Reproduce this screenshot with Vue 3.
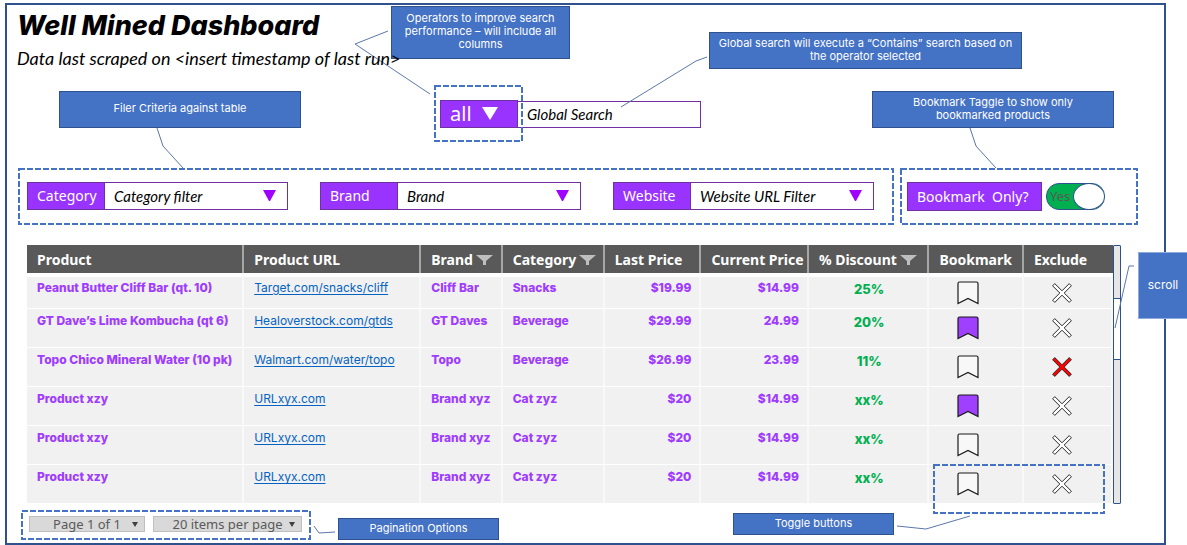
<script setup>
import { ref, reactive } from 'vue'

const operator = ref('all')
const query = ref('')
const bookmarkOnly = ref(true)
const page = ref('Page 1 of 1')
const pageSize = ref('20 items per page')

const filters = reactive([
  { id: 'category', label: 'Category', value: 'Category filter' },
  { id: 'brand', label: 'Brand', value: 'Brand' },
  { id: 'website', label: 'Website', value: 'Website URL Filter' },
])

const columns = [
  { key: 'product', label: 'Product' },
  { key: 'url', label: 'Product URL' },
  { key: 'brand', label: 'Brand', filter: true },
  { key: 'category', label: 'Category', filter: true },
  { key: 'last', label: 'Last Price' },
  { key: 'current', label: 'Current Price' },
  { key: 'discount', label: '% Discount', filter: true },
  { key: 'bookmark', label: 'Bookmark' },
  { key: 'exclude', label: 'Exclude' },
]

const rows = reactive([
  { product: 'Peanut Butter Cliff Bar (qt. 10)', url: 'Target.com/snacks/cliff', brand: 'Cliff Bar', category: 'Snacks', last: '$19.99', current: '$14.99', discount: '25%', bookmarked: false, excluded: false },
  { product: 'GT Dave’s Lime Kombucha (qt 6)', url: 'Healoverstock.com/gtds', brand: 'GT Daves', category: 'Beverage', last: '$29.99', current: '24.99', discount: '20%', bookmarked: true, excluded: false },
  { product: 'Topo Chico Mineral Water (10 pk)', url: 'Walmart.com/water/topo', brand: 'Topo', category: 'Beverage', last: '$26.99', current: '23.99', discount: '11%', bookmarked: false, excluded: true },
  { product: 'Product xzy', url: 'URLxyx.com', brand: 'Brand xyz', category: 'Cat zyz', last: '$20', current: '$14.99', discount: 'xx%', bookmarked: true, excluded: false },
  { product: 'Product xzy', url: 'URLxyx.com', brand: 'Brand xyz', category: 'Cat zyz', last: '$20', current: '$14.99', discount: 'xx%', bookmarked: false, excluded: false },
  { product: 'Product xzy', url: 'URLxyx.com', brand: 'Brand xyz', category: 'Cat zyz', last: '$20', current: '$14.99', discount: 'xx%', bookmarked: false, excluded: false },
])
</script>

<template>
  <main class="frame">
    <header class="head">
      <h1>Well Mined Dashboard</h1>
      <p class="stamp">Data last scraped on &lt;insert timestamp of last run&gt;</p>
    </header>

    <form class="search" @submit.prevent>
      <div class="operator">
        <select v-model="operator" aria-label="Search operator">
          <option>all</option>
          <option>any</option>
        </select>
        <svg class="op-arrow" viewBox="0 0 16 13"><path d="M0 0H16L8 13Z" fill="#fff" /></svg>
        <svg class="dashes op-dashes"><rect /></svg>
      </div>
      <input v-model="query" type="text" placeholder="Global Search" aria-label="Global Search" />
      <aside class="note note-operator">Operators to improve search performance – will include all columns</aside>
      <aside class="note note-global">Global search will execute a “Contains” search based on the operator selected</aside>
      <svg class="wire"><path d="M-52 -69L-85 -56L-10 -6M267 -43L256 -39L181 7" /></svg>
    </form>

    <section class="filters">
      <div class="region filter-group">
        <svg class="dashes"><rect /></svg>
        <div v-for="f in filters" :key="f.id" class="filter">
          <label :for="f.id">{{ f.label }}</label>
          <select :id="f.id" v-model="f.value">
            <option>{{ f.value }}</option>
          </select>
          <svg class="arrow" viewBox="0 0 13 11"><path d="M0 0H13L7 11H6Z" fill="#9f00ff" /></svg>
        </div>
        <aside class="note note-filter">Filer Criteria against table</aside>
        <svg class="wire"><path d="M139 -40L145 -22L165 0" /></svg>
      </div>
      <div class="region mark-group">
        <svg class="dashes"><rect /></svg>
        <label class="mark-label" for="only">Bookmark&nbsp; Only?</label>
        <label class="switch">
          <input id="only" v-model="bookmarkOnly" type="checkbox" role="switch" />
          <span>Yes</span>
          <i class="knob"></i>
        </label>
        <aside class="note note-mark">Bookmark Taggle to show only bookmarked products</aside>
        <svg class="wire"><path d="M70 -40L76 -22L96 0" /></svg>
      </div>
    </section>

    <section class="grid">
      <table>
        <colgroup>
          <col v-for="c in columns" :key="c.key" :class="'col-' + c.key" />
        </colgroup>
        <thead>
          <tr>
            <th v-for="c in columns" :key="c.key" scope="col">
              <span class="th">{{ c.label }}
                <svg v-if="c.filter" class="funnel" viewBox="0 0 17 10"><path d="M0 0H17L10 6V10H7V6Z" fill="#bfbfbf" /></svg>
              </span>
            </th>
          </tr>
        </thead>
        <tbody>
          <tr v-for="(r, i) in rows" :key="i">
            <td>{{ r.product }}</td>
            <td><a href="#">{{ r.url }}</a></td>
            <td>{{ r.brand }}</td>
            <td>{{ r.category }}</td>
            <td class="num">{{ r.last }}</td>
            <td class="num">{{ r.current }}</td>
            <td class="pct">{{ r.discount }}</td>
            <td class="act">
              <button type="button" aria-label="Bookmark" :aria-pressed="r.bookmarked" @click="r.bookmarked = !r.bookmarked">
                <svg width="22" height="24" viewBox="0 0 22 24">
                  <path d="M1 22.500V2.500Q1 1 2.500 1H19.500Q21 1 21 2.500V22.500L11 17.500Z" :fill="r.bookmarked ? '#9f40ff' : '#f8f8f8'" stroke="#1a1a1a" stroke-width="1.200" />
                </svg>
              </button>
            </td>
            <td class="act">
              <button type="button" aria-label="Exclude" :aria-pressed="r.excluded" @click="r.excluded = !r.excluded">
                <svg width="20" height="20" viewBox="0 0 20 20">
                  <path d="M2.800 .600L10 7.800L17.200 .600L19.400 2.800L12.200 10L19.400 17.200L17.200 19.400L10 12.200L2.800 19.400L.600 17.200L7.800 10L.600 2.800Z" :fill="r.excluded ? '#f00' : '#fff'" stroke="#2b2b2b" stroke-width="1" stroke-linejoin="round" />
                </svg>
              </button>
            </td>
          </tr>
        </tbody>
      </table>
      <div class="scrollbar">
        <i class="thumb"></i>
        <aside class="note note-scroll">scroll</aside>
        <svg class="wire"><path d="M20 20H15L1 82" /></svg>
      </div>
      <div class="toggle-region">
        <svg class="dashes"><rect /></svg>
        <aside class="note note-toggle">Toggle buttons</aside>
        <svg class="wire"><path d="M-36 62L-7 65L37 52" /></svg>
      </div>
    </section>

    <footer class="foot">
      <div class="region pager">
        <svg class="dashes"><rect /></svg>
        <span class="pick page">
          <select v-model="page" aria-label="Page"><option>Page 1 of 1</option></select>
          <svg viewBox="0 0 6 5"><path d="M0 0H6L3 5Z" fill="#404040" /></svg>
        </span>
        <span class="pick size">
          <select v-model="pageSize" aria-label="Items per page"><option>20 items per page</option></select>
          <svg viewBox="0 0 6 5"><path d="M0 0H6L3 5Z" fill="#404040" /></svg>
        </span>
        <svg class="wire"><path d="M293 16L298 23L314 22" /></svg>
      </div>
      <aside class="note note-page">Pagination Options</aside>
    </footer>
  </main>
</template>

<style>
body {
  background: #fff;
}
</style>

<style scoped>
.frame,
.frame * {
  box-sizing: border-box;
}
.frame {
  margin: 3px 21px 0 5px;
  border: 2px solid #2f528f;
  font-family: Inter, sans-serif;
  color: #000;
}
select,
input,
button {
  appearance: none;
  margin: 0;
  border: 0;
  border-radius: 0;
  background: transparent;
  font: inherit;
  color: inherit;
}
.head {
  position: relative;
  z-index: 2;
  padding: 4px 10px 0;
  width: max-content;
}
h1 {
  margin: 0;
  font-size: 27px;
  line-height: 34px;
  font-weight: 800;
  font-style: italic;
}
.stamp {
  margin: 0;
  font: italic 18px/30px Lato, sans-serif;
}

/* annotations */
.dashes {
  position: absolute;
  inset: 0;
  width: 100%;
  height: 100%;
  pointer-events: none;
}
.dashes rect {
  x: 1px;
  y: 1px;
  width: calc(100% - 2px);
  height: calc(100% - 2px);
  fill: none;
  stroke: #4472c4;
  stroke-width: 2;
  stroke-dasharray: 6 2;
}
.wire {
  position: absolute;
  left: 0;
  top: 0;
  width: 1px;
  height: 1px;
  overflow: visible;
  pointer-events: none;
}
.wire path {
  fill: none;
  stroke: #5b77ab;
  stroke-width: 1;
}
.note {
  position: absolute;
  display: flex;
  align-items: center;
  justify-content: center;
  padding: 0 8px 2px;
  border: 1px solid #2f528f;
  background: #4472c4;
  color: #fff;
  font-size: 11px;
  line-height: 13px;
  text-align: center;
}
.note-operator {
  left: -49px;
  top: -94px;
  width: 179px;
  height: 53px;
}
.note-global {
  left: 269px;
  top: -68px;
  width: 313px;
  height: 37px;
}
.note-filter {
  left: 41px;
  top: -77px;
  width: 242px;
  height: 37px;
}
.note-mark {
  left: -28px;
  top: -77px;
  width: 242px;
  height: 37px;
  padding: 0 36px 2px;
}
.note-scroll {
  left: 24px;
  top: 6px;
  width: 50px;
  height: 67px;
  padding: 0 0 2px;
  border-color: #8faadc;
  font-size: 12px;
}
.note-toggle {
  left: -200px;
  top: 49px;
  width: 161px;
  height: 22px;
}
.note-page {
  position: static;
  width: 161px;
  height: 22px;
}

/* search */
.search {
  position: relative;
  display: flex;
  align-items: flex-end;
  width: 261px;
  height: 28px;
  margin: 27px 0 0 433px;
}
.operator {
  position: relative;
  width: 78px;
}
.operator select {
  display: block;
  width: 100%;
  height: 28px;
  padding: 0 9px;
  border: 1px solid #7030a0;
  background: #9933ff;
  color: #fff;
  font: 20px/26px "Noto Sans", sans-serif;
}
.op-arrow {
  position: absolute;
  left: 42px;
  top: 7px;
  width: 16px;
  height: 13px;
  pointer-events: none;
}
.op-dashes {
  inset: -15px -5px -14px -6px;
  width: 89px;
  height: 57px;
}
.search input {
  flex: 1;
  min-width: 0;
  height: 27px;
  padding: 0 9px 2px;
  border: 1px solid #7030a0;
  border-left: 0;
  font: italic 15px/24px Lato, sans-serif;
}
.search input::placeholder {
  color: #000;
  opacity: 1;
}

/* filters */
.filters {
  display: flex;
  gap: 6px;
  margin: 40px 26px 0 11px;
}
.region {
  position: relative;
  display: flex;
}
.filter-group {
  flex: 1;
  justify-content: space-between;
  padding: 14px 20px 15px 9px;
}
.filter {
  position: relative;
  display: flex;
  width: 261px;
  height: 28px;
  border: 1px solid #7030a0;
  font-size: 15px;
  line-height: 26px;
}
.filter label {
  width: 77px;
  padding-left: 9px;
  border-right: 1px solid #7030a0;
  background: #9933ff;
  color: #fff;
  font-family: "Noto Sans", sans-serif;
  font-size: 14px;
}
.filter select {
  flex: 1;
  padding: 0 9px;
  font-family: Lato, sans-serif;
  font-style: italic;
}
.arrow {
  position: absolute;
  right: 11px;
  top: 7px;
  width: 13px;
  height: 11px;
  pointer-events: none;
}
.mark-group {
  width: 238px;
  padding: 14px 7px;
  gap: 4px;
  align-items: center;
}
.mark-label {
  width: 135px;
  height: 29px;
  padding-left: 9px;
  border: 1px solid #7030a0;
  background: #9933ff;
  color: #fff;
  font: 14px/28px "Noto Sans", sans-serif;
}
.switch {
  position: relative;
  width: 59px;
  height: 27px;
  padding-left: 3px;
  border: 1px solid #2f528f;
  border-radius: 13px;
  background: #00b050;
  color: #595959;
  overflow: hidden;
  font: 13px/25px "Noto Sans", sans-serif;
}
.switch input {
  position: absolute;
  inset: 0;
}
.knob {
  position: absolute;
  right: -1px;
  top: -1px;
  width: 32px;
  height: 27px;
  border: 1px solid #2f528f;
  border-radius: 50%;
  background: #fff;
}

/* table */
.grid {
  position: relative;
  display: flex;
  margin: 20px 43px 0 20px;
}
table {
  flex: 1;
  table-layout: fixed;
  border-collapse: separate;
  border-spacing: 0;
}
.col-product { width: 20%; }
.col-url { width: 16.300%; }
.col-brand { width: 7.500%; }
.col-category { width: 9.400%; }
.col-last { width: 8.900%; }
.col-current { width: 9.900%; }
.col-discount { width: 11.100%; }
.col-bookmark { width: 8.700%; }
.col-exclude { width: 8.200%; }
th {
  height: 28px;
  padding: 2px 0 0 10px;
  border-right: 2px solid #a6a6a6;
  background: #595959;
  color: #fff;
  font: bold 14px/24px "Noto Sans", sans-serif;
  text-align: left;
  white-space: nowrap;
}
th:last-child {
  border-right: 0;
}
.th {
  display: flex;
  align-items: center;
  gap: 3px;
}
.funnel {
  width: 17px;
  height: 10px;
  flex: none;
}
td {
  height: 39px;
  padding: 3px 8px 0 10px;
  border-right: 2px solid #f9f9f9;
  border-bottom: 1px solid #fff;
  background: #f1f1f1;
  color: #9f3cff;
  font-size: 12px;
  line-height: 17px;
  font-weight: 800;
  vertical-align: top;
  white-space: nowrap;
}
tbody tr:first-child td {
  height: 36px;
  border-top: 4px solid #fff;
  padding-top: 2px;
}
td a {
  color: #0563c1;
  font-weight: 400;
  text-underline-offset: 2px;
}
td.num {
  text-align: right;
}
td.pct {
  padding-top: 5px;
  color: #00b050;
  font-size: 13px;
  text-align: center;
}
tbody tr:first-child td.pct {
  padding-top: 4px;
}
td.act,
tbody tr:first-child td.act {
  padding: 0 0 0 28px;
  vertical-align: middle;
}
td button {
  display: block;
  padding: 0;
}
td svg {
  display: block;
}
.scrollbar {
  position: relative;
  width: 8px;
  border: 1px solid #2f528f;
  border-radius: 1px;
  background: #e7e6e6;
}
.thumb {
  position: absolute;
  left: -1px;
  top: 52px;
  width: 8px;
  height: 62px;
  border: 1px solid #2f528f;
  background: #fff;
}
.toggle-region {
  position: absolute;
  right: 16px;
  bottom: -10px;
  width: 172px;
  height: 50px;
  pointer-events: none;
}

/* footer */
.foot {
  display: flex;
  align-items: flex-end;
  gap: 27px;
  padding: 6px 14px 3px;
}
.pager {
  gap: 8px;
  padding: 6px 9px 8px 8px;
}
.pick {
  position: relative;
}
.pick select {
  display: block;
  width: 100%;
  height: 16px;
  padding: 0;
  background: #d9d9d9;
  box-shadow: inset 0 0 0 1px #bfbfbf;
  color: #595959;
  font: 13px/16px "Noto Sans", sans-serif;
  text-align: center;
}
.page {
  width: 116px;
}
.size {
  width: 149px;
}
.pick svg {
  position: absolute;
  right: 7px;
  top: 6px;
  width: 6px;
  height: 5px;
  pointer-events: none;
}
</style>
